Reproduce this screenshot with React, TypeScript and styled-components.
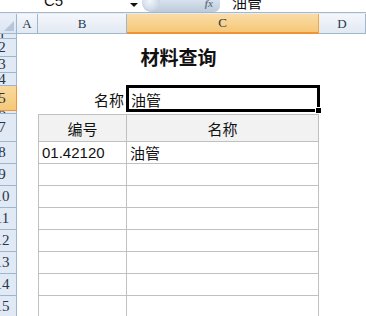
import React from 'react';
import styled, { createGlobalStyle, css } from 'styled-components';

const GlobalStyle = createGlobalStyle`
  html, body {
    margin: 0;
    padding: 0;
    background: #ffffff;
    overflow: hidden;
  }
  body {
    font-family: "Liberation Sans", "Noto Sans CJK SC", sans-serif;
  }
`;

const COLS = '17px 21px 89px 192px 1fr';
// Excel row heights (px) for rows 1..15
const ROW_HEIGHTS = [5, 18, 16, 13, 25, 3, 28, 22, 22, 22, 22, 22, 22, 22, 22];
const GRID_LINE = '#9eb6ce';
const TABLE_LINE = '#c0c0c0';

const Window = styled.div`
  width: 366px;
  height: 316px;
  overflow: hidden;
  display: flex;
  flex-direction: column;
  background: #fff;
`;

const FormulaBar = styled.div`
  flex: 0 0 12px;
  display: flex;
  align-items: flex-end;
  overflow: hidden;
  border-bottom: 1px solid #a6b6cb;
  box-shadow: 0 1px 0 #e6ecf4;
  margin-bottom: 1px;
`;

const NameBox = styled.div`
  flex: 0 0 126px;
  height: 100%;
  display: flex;
  align-items: flex-end;
  padding-left: 44px;
  box-sizing: border-box;
`;

const BarText = styled.span<{ $cjk?: boolean }>`
  font-family: ${p => (p.$cjk ? '"Noto Sans CJK SC", sans-serif' : '"Liberation Sans", sans-serif')};
  font-size: 15px;
  line-height: 15px;
  padding-bottom: ${p => (p.$cjk ? 3 : 4)}px;
  color: #111;
  white-space: nowrap;
`;

const DropArrow = styled.div`
  flex: 0 0 16px;
  height: 100%;
  display: flex;
  justify-content: center;
  padding-top: 3px;
  box-sizing: border-box;

  &::before {
    content: "";
    border-left: 4px solid transparent;
    border-right: 4px solid transparent;
    border-top: 4px solid #111;
    height: 0;
  }
`;

const FxPanel = styled.div`
  flex: 0 0 78px;
  height: 100%;
  display: flex;
  align-items: center;
  justify-content: flex-end;
  padding-right: 7px;
  box-sizing: border-box;
  border-radius: 0 0 6px 9px;
  background: linear-gradient(180deg, #d9e2ee 0%, #bccada 100%);
  position: relative;
`;

const Knob = styled.div`
  position: absolute;
  left: 1px;
  top: -6px;
  width: 17px;
  height: 17px;
  border-radius: 50%;
  background: radial-gradient(circle at 40% 40%, #f4f7fb 0%, #cbd6e4 70%, #aebdd2 100%);
`;

const FxLabel = styled.span`
  font-family: "Liberation Serif", serif;
  font-style: italic;
  font-weight: bold;
  font-size: 10px;
  color: #66758a;
  line-height: 10px;
  margin-top: -4px;
`;

const FormulaInput = styled.div`
  flex: 1;
  height: 100%;
  display: flex;
  align-items: flex-end;
  padding-left: 9px;
  margin-left: 3px;
`;

const HeaderRow = styled.div`
  flex: 0 0 20px;
  display: grid;
  grid-template-columns: ${COLS};
`;

const Corner = styled.div`
  background: linear-gradient(180deg, #eaf0f8, #dbe5f2);
  border-right: 1px solid ${GRID_LINE};
  border-bottom: 1px solid ${GRID_LINE};
  position: relative;

  &::after {
    content: "";
    position: absolute;
    right: 2px;
    bottom: 2px;
    border-left: 10px solid transparent;
    border-bottom: 10px solid #b6c6da;
  }
`;

const ColHead = styled.div<{ $active?: boolean }>`
  display: flex;
  align-items: center;
  justify-content: center;
  font-family: "Liberation Serif", serif;
  font-size: 13px;
  color: #27364a;
  border-right: 1px solid ${GRID_LINE};
  border-bottom: 1px solid ${GRID_LINE};
  background: linear-gradient(180deg, #f4f7fb 0%, #e2e9f3 100%);

  ${p =>
    p.$active &&
    css`
      background: linear-gradient(180deg, #f9dca6 0%, #f6c879 100%);
      border-right-color: #f0a548;
      border-bottom: 2px solid #f29436;
    `}
`;

const Sheet = styled.div`
  flex: 0 0 auto;
  display: grid;
  grid-template-columns: ${COLS};
  grid-template-rows: ${ROW_HEIGHTS.map(h => `${h}px`).join(' ')} 22px;
`;

const RowHead = styled.div<{ $row: number; $active?: boolean }>`
  grid-column: 1;
  grid-row: ${p => p.$row};
  display: flex;
  align-items: center;
  overflow: hidden;
  background: ${p => (p.$active ? 'linear-gradient(180deg, #f9d99e, #f6c878)' : '#e1e9f5')};
  border-right: 1px solid ${p => (p.$active ? '#f29436' : GRID_LINE)};
  border-bottom: 1px solid ${p => (p.$active ? '#f29436' : GRID_LINE)};
  box-sizing: border-box;
`;

// the row-number column is wider than what shows; the window cuts its left part
const RowLabel = styled.span`
  flex: 0 0 26px;
  margin-left: -11px;
  text-align: center;
  font-family: "Liberation Serif", serif;
  font-size: 15px;
  line-height: 15px;
  color: #27364a;
`;

const Title = styled.div`
  grid-column: 3 / 5;
  grid-row: 2 / 4;
  display: flex;
  align-items: center;
  justify-content: center;
  font-family: "Noto Sans CJK SC", sans-serif;
  font-weight: 700;
  font-size: 19px;
  color: #111;
`;

const Label = styled.div`
  grid-column: 3;
  grid-row: 5;
  display: flex;
  align-items: center;
  justify-content: flex-end;
  padding-right: 3px;
  padding-top: 1px;
  font-family: "Noto Sans CJK SC", sans-serif;
  font-size: 15px;
  color: #111;
`;

const ActiveCell = styled.div`
  grid-column: 4;
  grid-row: 5;
  position: relative;
  display: flex;
  align-items: center;
  padding-left: 4px;
  padding-top: 1px;
  font-family: "Noto Sans CJK SC", sans-serif;
  font-size: 15px;
  color: #111;

  &::before {
    content: "";
    position: absolute;
    left: -1px;
    top: -1px;
    right: -1px;
    bottom: -1px;
    border: 3px solid #000;
  }

  &::after {
    content: "";
    position: absolute;
    right: -2px;
    bottom: -2px;
    width: 5px;
    height: 5px;
    background: #000;
    border: 1px solid #fff;
    border-right: none;
    border-bottom: none;
  }
`;

const Cell = styled.div<{ $row: number; $col: number; $head?: boolean; $center?: boolean }>`
  grid-row: ${p => p.$row};
  grid-column: ${p => p.$col};
  display: flex;
  align-items: center;
  justify-content: ${p => (p.$center ? 'center' : 'flex-start')};
  padding-left: ${p => (p.$center ? 0 : 3)}px;
  box-sizing: border-box;
  font-family: "Liberation Sans", "Noto Sans CJK SC", sans-serif;
  font-size: 15px;
  color: #111;
  white-space: nowrap;
  background: ${p => (p.$head ? '#f2f2f2' : '#fff')};
  border-right: 1px solid ${TABLE_LINE};
  border-bottom: 1px solid ${TABLE_LINE};
  ${p => p.$col === 3 && css`border-left: 1px solid ${TABLE_LINE};`}
  ${p => p.$head && css`border-top: 1px solid ${TABLE_LINE};`}
`;

const rows: [string, string][] = [['01.42120', '油管']];
for (let i = 0; i < 8; i++) rows.push(['', '']);

const App = () => {
  return (
    <>
      <GlobalStyle />
      <Window>
        <FormulaBar>
          <NameBox>
            <BarText>C5</BarText>
          </NameBox>
          <DropArrow />
          <FxPanel>
            <Knob />
            <FxLabel>fx</FxLabel>
          </FxPanel>
          <FormulaInput>
            <BarText $cjk>油管</BarText>
          </FormulaInput>
        </FormulaBar>

        <HeaderRow>
          <Corner />
          <ColHead>A</ColHead>
          <ColHead>B</ColHead>
          <ColHead $active>C</ColHead>
          <ColHead>D</ColHead>
        </HeaderRow>

        <Sheet>
          {[...ROW_HEIGHTS, 22].map((_, i) => (
            <RowHead key={i} $row={i + 1} $active={i + 1 === 5}>
              <RowLabel>{i + 1}</RowLabel>
            </RowHead>
          ))}

          <Title>材料查询</Title>
          <Label>名称</Label>
          <ActiveCell>油管</ActiveCell>

          <Cell $row={7} $col={3} $head $center>编号</Cell>
          <Cell $row={7} $col={4} $head $center>名称</Cell>
          {rows.map(([code, name], i) => (
            <React.Fragment key={i}>
              <Cell $row={8 + i} $col={3}>{code}</Cell>
              <Cell $row={8 + i} $col={4}>{name}</Cell>
            </React.Fragment>
          ))}
        </Sheet>
      </Window>
    </>
  );
};

export default App;
